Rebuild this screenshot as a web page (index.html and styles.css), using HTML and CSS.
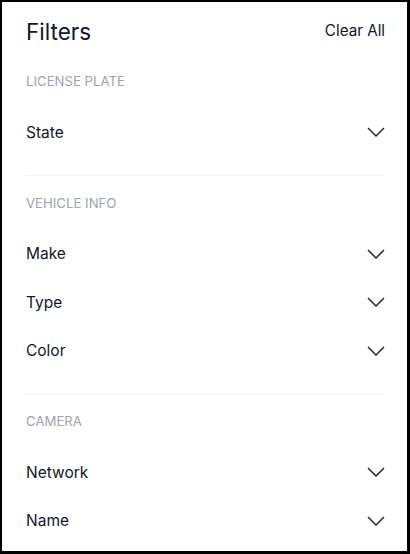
FILE: index.html
```html
<!DOCTYPE html>
<html>
<head>
<meta charset="utf-8">
<link rel="stylesheet" href="styles.css">
</head>
<body>
<div class="panel">
  <div class="header">
    <h1 class="title">Filters</h1>
    <button class="clear">Clear All</button>
  </div>

  <section class="section">
    <div class="label">License Plate</div>
    <div class="row"><span>State</span><svg class="chev" viewBox="0 0 18 10"><path d="M1 1 L9 9 L17 1"/></svg></div>
  </section>
  <hr class="divider">
  <section class="section">
    <div class="label">Vehicle Info</div>
    <div class="row"><span>Make</span><svg class="chev" viewBox="0 0 18 10"><path d="M1 1 L9 9 L17 1"/></svg></div>
    <div class="row"><span>Type</span><svg class="chev" viewBox="0 0 18 10"><path d="M1 1 L9 9 L17 1"/></svg></div>
    <div class="row"><span>Color</span><svg class="chev" viewBox="0 0 18 10"><path d="M1 1 L9 9 L17 1"/></svg></div>
  </section>
  <hr class="divider">
  <section class="section">
    <div class="label">Camera</div>
    <div class="row"><span>Network</span><svg class="chev" viewBox="0 0 18 10"><path d="M1 1 L9 9 L17 1"/></svg></div>
    <div class="row"><span>Name</span><svg class="chev" viewBox="0 0 18 10"><path d="M1 1 L9 9 L17 1"/></svg></div>
  </section>
</div>
</body>
</html>
```
FILE: styles.css
```css
html, body {
  margin: 0;
  padding: 0;
  height: 100%;
  background: #000;
}
body {
  padding: 2px 3px 3px 2px;
  box-sizing: border-box;
  font-family: Inter, "Liberation Sans", sans-serif;
}
.panel {
  background: #fff;
  height: 100%;
  box-sizing: border-box;
  padding: 16px 22px 0 24px;
  overflow: hidden;
}
.header {
  display: flex;
  justify-content: space-between;
  align-items: center;
  height: 28px;
  margin-bottom: 27px;
}
.title {
  margin: 0;
  font-size: 22.5px;
  font-weight: 400;
  line-height: 28px;
  color: #0f172a;
}
.clear {
  border: 0;
  background: none;
  padding: 0;
  font-family: inherit;
  font-size: 15.2px;
  line-height: 20px;
  color: #0f172a;
  margin-top: -2px;
}
.section {
  display: flex;
  flex-direction: column;
}
.label {
  font-size: 13.2px;
  line-height: 16px;
  text-transform: uppercase;
  color: #9ca3af;
  margin-bottom: 19px;
}
.row {
  display: flex;
  justify-content: space-between;
  align-items: center;
  height: 48.5px;
  font-size: 15.5px;
  color: #0f172a;
}
.chev {
  width: 18px;
  height: 10px;
  fill: none;
  stroke: #1f2937;
  stroke-width: 1.5;
}
.divider {
  border: 0;
  height: 1px;
  background: #f1f3f6;
  margin: 18.5px 0 18.5px;
}
```
